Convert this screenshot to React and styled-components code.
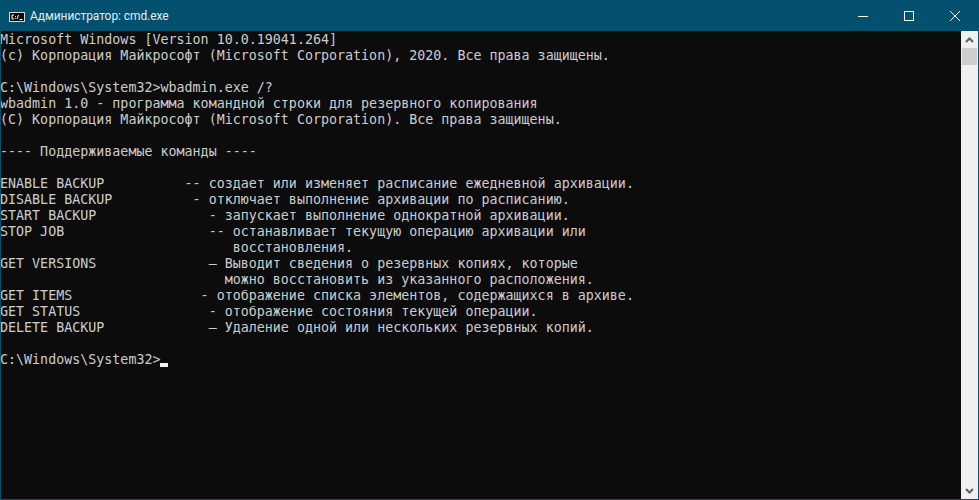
import React from "react";
import styled, { createGlobalStyle } from "styled-components";

const Global = createGlobalStyle`
  html, body { margin: 0; padding: 0; background: #0c0c0c; overflow: hidden; }
`;

const Win = styled.div`
  width: 979px;
  height: 500px;
  box-sizing: border-box;
  border: 1px solid #03506f;
  border-top: 0;
  display: flex;
  flex-direction: column;
  overflow: hidden;
`;

const TitleBar = styled.div`
  height: 31px;
  flex: none;
  background: #03506f;
  display: flex;
  align-items: center;
`;

const AppIcon = styled.svg`
  width: 16px;
  height: 16px;
  margin: 1px 0 0 8px;
  flex: none;
`;

const Title = styled.div`
  margin-left: 5px;
  flex: 1;
  font: 12px/16px Roboto, "Open Sans", sans-serif;
  letter-spacing: -0.08px;
  color: #e3ecf0;
`;

const Caption = styled.div`
  width: 46px;
  height: 31px;
  display: flex;
  align-items: center;
  justify-content: center;
`;

const Body = styled.div`
  flex: 1;
  display: flex;
  min-height: 0;
`;

const Console = styled.pre`
  flex: 1;
  margin: 0;
  padding: 1px 0 0;
  background: #0c0c0c;
  color: #cccccc;
  font: 13.33px/16px "DejaVu Sans Mono", "Liberation Mono", monospace;
  overflow: hidden;
`;

const Line = styled.div`
  height: 16px;
  white-space: pre;
  margin-left: -1px;
`;

const Cursor = styled.span`
  display: inline-block;
  width: 8px;
  height: 4px;
  background: #f2f2f2;
  vertical-align: -3px;
`;

const ScrollBar = styled.div`
  width: 17px;
  flex: none;
  background: #f0f0f0;
  display: flex;
  flex-direction: column;
`;

const ScrollButton = styled.div`
  height: 17px;
  flex: none;
  display: flex;
  align-items: center;
  justify-content: center;
`;

const Thumb = styled.div`
  height: 17px;
  flex: none;
  background: #cdcdcd;
  margin: 0 1px;
`;

const Track = styled.div`
  flex: 1;
`;

const lines = [
  "Microsoft Windows [Version 10.0.19041.264]",
  "(c) Корпорация Майкрософт (Microsoft Corporation), 2020. Все права защищены.",
  "",
  "C:\\Windows\\System32>wbadmin.exe /?",
  "wbadmin 1.0 - программа командной строки для резервного копирования",
  "(C) Корпорация Майкрософт (Microsoft Corporation). Все права защищены.",
  "",
  "---- Поддерживаемые команды ----",
  "",
  "ENABLE BACKUP          -- создает или изменяет расписание ежедневной архивации.",
  "DISABLE BACKUP          - отключает выполнение архивации по расписанию.",
  "START BACKUP              - запускает выполнение однократной архивации.",
  "STOP JOB                  -- останавливает текущую операцию архивации или",
  "                             восстановления.",
  "GET VERSIONS              — Выводит сведения о резервных копиях, которые",
  "                            можно восстановить из указанного расположения.",
  "GET ITEMS                - отображение списка элементов, содержащихся в архиве.",
  "GET STATUS                - отображение состояния текущей операции.",
  "DELETE BACKUP             — Удаление одной или нескольких резервных копий.",
  "",
];

export default function App() {
  return (
    <Win>
      <Global />
      <TitleBar>
        <AppIcon viewBox="0 0 16 16">
          <rect x="0.5" y="4.5" width="15" height="9" fill="#0c0c0c" stroke="#d8d8d8" />
          <path d="M5 7H3v4h2M6.5 8v.8M6.5 10v.8M9.5 7l-1.5 4M10.5 11.5h3" stroke="#fff" strokeWidth="1" fill="none" />
        </AppIcon>
        <Title>Администратор: cmd.exe</Title>
        <Caption>
          <svg width="10" height="10" viewBox="0 0 10 10"><path d="M0 5.5h10" stroke="#fff" /></svg>
        </Caption>
        <Caption>
          <svg width="10" height="10" viewBox="0 0 10 10"><rect x="0.5" y="0.5" width="9" height="9" fill="none" stroke="#fff" /></svg>
        </Caption>
        <Caption>
          <svg width="10" height="10" viewBox="0 0 10 10"><path d="M0 0l10 10M10 0L0 10" stroke="#fff" /></svg>
        </Caption>
      </TitleBar>
      <Body>
        <Console>
          {lines.map((l, i) => (
            <Line key={i}>{l}</Line>
          ))}
          <Line>
            {"C:\\Windows\\System32>"}
            <Cursor />
          </Line>
        </Console>
        <ScrollBar>
          <ScrollButton>
            <svg width="9" height="6" viewBox="0 0 9 6"><path d="M1 5l3.5-3.5L8 5" fill="none" stroke="#606060" strokeWidth="2" /></svg>
          </ScrollButton>
          <Thumb />
          <Track />
          <ScrollButton>
            <svg width="9" height="6" viewBox="0 0 9 6"><path d="M1 1l3.5 3.5L8 1" fill="none" stroke="#606060" strokeWidth="2" /></svg>
          </ScrollButton>
        </ScrollBar>
      </Body>
    </Win>
  );
}
